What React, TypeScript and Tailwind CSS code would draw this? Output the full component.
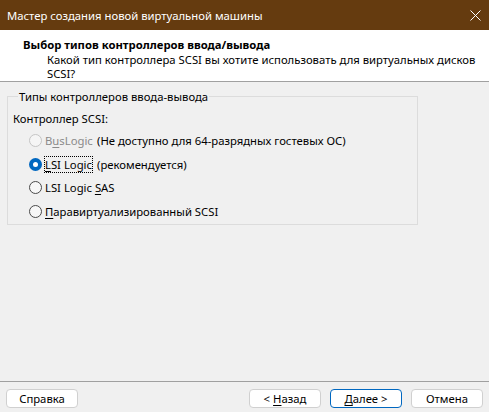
import React from "react";

type Choice = {
  id: string;
  key: string;
  before: string;
  rest: string;
  note?: string;
  disabled?: boolean;
  checked?: boolean;
};

const choices: Choice[] = [
  { id: "bus", before: "B", key: "u", rest: "sLogic", note: "(Не доступно для 64-разрядных гостевых ОС)", disabled: true },
  { id: "lsi", before: "", key: "L", rest: "SI Logic", note: "(рекомендуется)", checked: true },
  { id: "sas", before: "LSI Logic ", key: "S", rest: "AS" },
  { id: "pv", before: "", key: "П", rest: "аравиртуализированный SCSI" },
];

function Radio({ checked, disabled }: { checked?: boolean; disabled?: boolean }) {
  if (checked) {
    return (
      <span className="flex h-[13px] w-[13px] shrink-0 items-center justify-center rounded-full bg-[#0067c0]">
        <span className="h-[5px] w-[5px] rounded-full bg-white" />
      </span>
    );
  }
  return (
    <span
      className={
        disabled
          ? "h-[13px] w-[13px] shrink-0 rounded-full border border-[#c5c5c5] bg-[#f5f5f5]"
          : "h-[13px] w-[13px] shrink-0 rounded-full border border-[#4a4a4a] bg-[#f7f7f7]"
      }
    />
  );
}

function Button({ children, primary }: { children: React.ReactNode; primary?: boolean }) {
  return (
    <button
      className={
        primary
          ? "flex h-[19px] w-[72px] items-center justify-center rounded-[4px] border border-[#0067c0] bg-white text-black"
          : "flex h-[19px] w-[72px] items-center justify-center rounded-[4px] border border-[#d0d0d0] bg-white text-black"
      }
    >
      {children}
    </button>
  );
}

export default function App() {
  return (
    <div
      className="flex h-[412px] w-[489px] flex-col bg-[#f0f0f0] text-[11.3px] leading-[15px] text-black"
      style={{ fontFamily: '"Noto Sans", "Open Sans", sans-serif' }}
    >
      <div className="flex h-[30px] shrink-0 items-center justify-between bg-[#653b0f] pl-[7px] pr-[8px]">
        <span className="text-white">Мастер создания новой виртуальной машины</span>
        <svg width="11" height="11" viewBox="0 0 11 11">
          <path d="M0.5 0.5 L10.5 10.5 M10.5 0.5 L0.5 10.5" stroke="white" strokeWidth="1" />
        </svg>
      </div>

      <div className="h-[52px] shrink-0 whitespace-nowrap border-b border-[#a0a0a0] bg-white pt-[7px]">
        <div className="pl-[23px] font-bold">Выбор типов контроллеров ввода/вывода</div>
        <div className="mt-[1px] pl-[47px] leading-[14px]">
          Какой тип контроллера SCSI вы хотите использовать для виртуальных дисков
          <br />
          SCSI?
        </div>
      </div>

      <div className="flex-1 pt-[7px]">
        <fieldset className="ml-[7px] w-[411px] border border-[#dcdcdc] pb-[1px] pl-[5px]">
          <legend className="ml-[5px] px-[1px]">Типы контроллеров ввода-вывода</legend>
          <div className="pt-[7px]">Контроллер SCSI:</div>
          <div className="mt-[3px] flex flex-col pl-[16px]">
            {choices.map((c) => (
              <div key={c.id} className="flex h-[23.5px] items-center whitespace-nowrap">
                <Radio checked={c.checked} disabled={c.disabled} />
                <span className="ml-[3px] min-w-[52px] shrink-0">
                  <span
                    className={
                      c.checked
                        ? "outline outline-1 outline-dotted outline-black"
                        : c.disabled
                        ? "text-[#8a8a8a]"
                        : ""
                    }
                  >
                    {c.before}
                    <span className="underline underline-offset-2">{c.key}</span>
                    {c.rest}
                  </span>
                </span>
                {c.note && <span>{c.note}</span>}
              </div>
            ))}
          </div>
        </fieldset>
      </div>

      <div className="flex h-[31px] shrink-0 items-start border-t border-[#a0a0a0] px-[6px] pt-[7px]">
        <Button>Справка</Button>
        <div className="ml-auto flex gap-[9px]">
          <Button>
            &lt; <span className="ml-[3px] underline underline-offset-2">Н</span>азад
          </Button>
          <Button primary>
            <span className="underline underline-offset-2">Д</span>алее &gt;
          </Button>
          <Button>Отмена</Button>
        </div>
      </div>
    </div>
  );
}
